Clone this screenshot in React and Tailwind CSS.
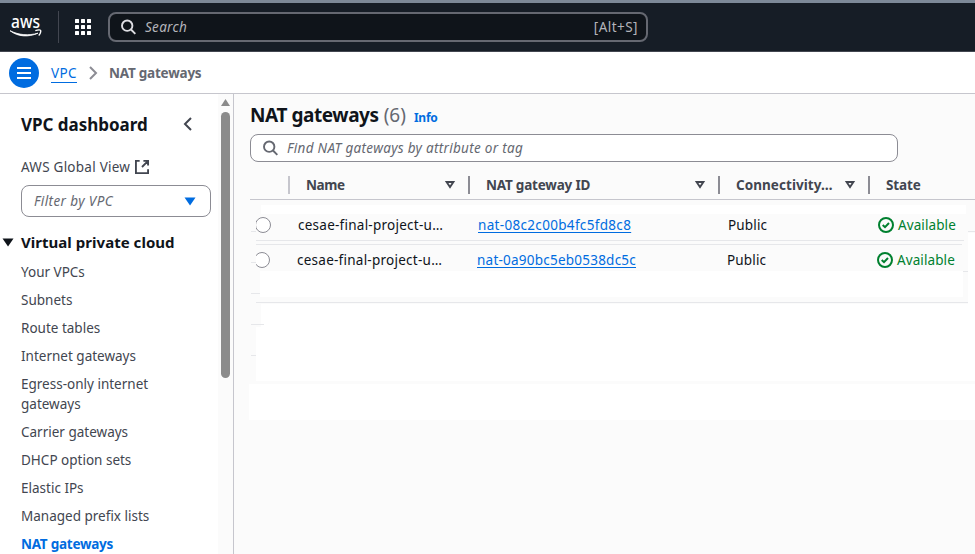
const patches = [
  'left-[27px] top-[111px] w-[705px] h-[9px]',
  'left-[26px] top-[177px] w-[703px] h-[26px]',
  'left-[27px] top-[210px] w-[714px] h-[23px]',
  'left-[22px] top-[233px] w-[719px] h-[54px]',
  'left-[15px] top-[290px] w-[726px] h-[36px]',
  'left-[734px] top-[139px] w-[7px] h-[80px]',
];

const rules = [
  'left-[22px] top-[146px] w-[708px]',
  'left-[22px] top-[150px] w-[706px]',
  'left-[22px] top-[208px] w-[712px]',
  'left-[17px] top-[137px] w-[5px]',
  'left-[17px] top-[168px] w-[5px]',
  'left-[17px] top-[199px] w-[9px]',
  'left-[17px] top-[230px] w-[13px]',
  'left-[17px] top-[261px] w-[5px]',
  'left-[734px] top-[137px] w-[7px]',
  'left-[729px] top-[177px] w-[5px]',
];

const links = ['Your VPCs', 'Subnets', 'Route tables', 'Internet gateways', 'Egress-only internet gateways', 'Carrier gateways', 'DHCP option sets', 'Elastic IPs', 'Managed prefix lists'];

function SearchIcon({ className }) {
  return (
    <svg className={className} width="16" height="16" viewBox="0 0 16 16" fill="none" stroke="currentColor" strokeWidth="1.9">
      <circle cx="6.2" cy="6.7" r="5.2" />
      <path d="m10 10.500 4.300 4.300" />
    </svg>
  );
}

function SortIcon() {
  return (
    <svg className="shrink-0 text-[#424650]" width="12" height="10" viewBox="0 0 12 10" fill="none" stroke="currentColor" strokeWidth="1.9">
      <path d="M2.600 2h6.800L6 7.100z" />
    </svg>
  );
}

function Header({ label, width, tracking = '', sortable = true, first }) {
  return (
    <div className={`flex h-[30px] shrink-0 items-center ${width}`}>
      <span className={`h-[18px] w-[2px] ${first ? 'bg-[#c6c6cd]' : 'bg-[#8c8c94]'}`} />
      <span className={`ml-4 flex-1 text-[13.5px] font-bold whitespace-nowrap text-[#424650] ${tracking}`}>{label}</span>
      {sortable && <span className="mr-[12px]"><SortIcon /></span>}
    </div>
  );
}

function Row({ id, className, idTracking, radioClip }) {
  return (
    <div className={`flex h-5 items-center text-[13.5px] leading-5 whitespace-nowrap text-[#0f141a] ${className}`}>
      <span className={`h-4 w-4 shrink-0 rounded-full border border-[#8c8c94] bg-white ${radioClip}`} />
      <span className="ml-[27px] w-[180px] shrink-0 tracking-[0.25px]">cesae-final-project-u…</span>
      <span className="w-[250px] shrink-0"><a className={`text-[#006ce0] underline underline-offset-2 ${idTracking}`}>{id}</a></span>
      <span className="w-[149px] shrink-0 tracking-[0.15px]">Public</span>
      <svg className="shrink-0 text-[#00802f]" width="18" height="18" viewBox="0 0 18 18" fill="none" stroke="currentColor" strokeWidth="2">
        <circle cx="9" cy="9" r="7" />
        <path d="m5.700 9 2.300 2.200 4-4.200" />
      </svg>
      <span className="ml-[3px] tracking-[0.1px] text-[#00802f]">Available</span>
    </div>
  );
}

export default function App() {
  return (
    <div className="flex h-[554px] w-[975px] flex-col overflow-hidden bg-white font-['Noto_Sans',sans-serif]">
      <header className="flex h-[52px] shrink-0 items-center border-t-[3px] border-b border-t-[#7d8998] border-b-[#424650] bg-[#161d26] text-white">
        <svg className="ml-[9px] w-[34px] overflow-visible" height="46" viewBox="0 -11 34 46">
          <text x="2" y="12.500" fontSize="18.5" fontWeight="500" fill="currentColor" textLength="29" lengthAdjust="spacingAndGlyphs">aws</text>
          <path d="M1 15.700C9 22 19.500 22.300 29 18.200c-9.500 2.600-19 2-28-2.500z" fill="currentColor" stroke="currentColor" strokeWidth="0.800" strokeLinejoin="round" />
          <path d="M26.300 15.600c2.300-.7 4.800-.8 5.300-.2.500.8-.2 3.400-1.900 5.100" fill="none" stroke="currentColor" strokeWidth="1.400" />
        </svg>
        <span className="ml-[15px] h-8 w-px bg-[#424650]" />
        <span className="ml-4 grid grid-cols-3 gap-[2px]">
          {Array.from({ length: 9 }, (_, i) => <i key={i} className="h-[4px] w-[4px] rounded-[0.5px] bg-white" />)}
        </span>
        <div className="ml-[17px] flex h-[30px] w-[540px] items-center rounded-lg border-2 border-[#656871] bg-[#0f141a] px-[10px] text-[13.5px] text-[#b4b4bb]">
          <SearchIcon className="ml-px text-[#dedee3]" />
          <span className="ml-[8px] flex-1 tracking-[0.3px] italic">Search</span>
          <span className="-mr-[2px] tracking-[0.45px]">[Alt+S]</span>
        </div>
      </header>
      <nav className="flex h-[42px] shrink-0 items-center border-b border-[#c6c6cd] pl-[9px] text-[13.5px]">
        <span className="flex h-[30px] w-[30px] flex-col items-center justify-center gap-[3px] rounded-full bg-[#006ce0]">
          <i className="h-[2px] w-[14px] bg-white" /><i className="h-[2px] w-[14px] bg-white" /><i className="h-[2px] w-[14px] bg-white" />
        </span>
        <a className="mt-[2px] ml-3 w-[26px] border-b border-[#006ce0] leading-[18px] tracking-[0.4px] text-[#006ce0]">VPC</a>
        <svg className="ml-3 text-[#8c8c94]" width="9" height="14" viewBox="0 0 9 14" fill="none" stroke="currentColor" strokeWidth="2"><path d="m1 1 6 6-6 6" /></svg>
        <span className="mt-[2px] ml-[11px] font-bold tracking-[-0.22px] text-[#656871]">NAT gateways</span>
      </nav>
      <div className="flex min-h-0 flex-1">
        <aside className="flex w-[234px] shrink-0 border-r border-[#c6c6cd]">
          <div className="w-[218px] shrink-0 text-[13.5px] leading-5 text-[#424650]">
            <div className="mt-[19px] flex h-6 items-center pl-[21px] text-[#0f141a]">
              <h2 className="w-[162px] text-[17px] font-bold tracking-[-0.03px] whitespace-nowrap">VPC dashboard</h2>
              <svg className="mb-[2px] text-[#424650]" width="9" height="14" viewBox="0 0 9 14" fill="none" stroke="currentColor" strokeWidth="2"><path d="m8 1-6 6 6 6" /></svg>
            </div>
            <div className="mt-[20px] flex items-center pl-[21px]">
              <span className="tracking-[0.25px]">AWS Global View</span>
              <svg className="ml-[5px]" width="14" height="14" viewBox="0 0 15 15" fill="none" stroke="currentColor" strokeWidth="2"><path d="M5 1H1v13h13v-4M9 1h5v5M13.500 1.500 7.500 7.500" /></svg>
            </div>
            <div className="mt-2 ml-[21px] flex h-8 w-[190px] items-center rounded-lg border border-[#8c8c94] pr-[14px] pl-3 text-[#656871]">
              <span className="flex-1 tracking-[0.4px] italic">Filter by VPC</span>
              <svg width="12" height="9" viewBox="0 0 12 9" fill="#006ce0"><path d="M.5.500h11L6 8.500z" /></svg>
            </div>
            <div className="mt-[15px] flex items-center pl-[2px] text-[#0f141a]">
              <svg width="12" height="9" viewBox="0 0 12 9" fill="currentColor"><path d="M.5.500h11L6 8.500z" /></svg>
              <h3 className="ml-[7px] text-[15px] font-bold tracking-[0.03px] whitespace-nowrap">Virtual private cloud</h3>
            </div>
            <ul className="mt-[10px] flex w-[180px] flex-col gap-2 pl-[21px]">
              {links.map((l) => <li key={l}>{l}</li>)}
              <li className="font-bold tracking-[-0.25px] text-[#006ce0]">NAT gateways</li>
            </ul>
          </div>
          <div className="flex w-[15px] flex-col items-center bg-[#fbfbfb] pt-[5px]">
            <svg width="9" height="7" viewBox="0 0 9 7" fill="#8b8b8b"><path d="M4.500 0 9 7H0z" /></svg>
            <span className="mt-[6px] h-[266px] w-[9px] rounded-full bg-[#8b8b8b]" />
          </div>
        </aside>
        <main className="relative flex-1 overflow-hidden bg-[#fbfbfb]">
          {patches.map((c) => <i key={c} className={`absolute bg-white ${c}`} />)}
          {rules.map((c) => <i key={c} className={`absolute h-px bg-[#e6e7ea] ${c}`} />)}
          <div className="relative pl-4">
            <div className="flex items-baseline pt-[9px] leading-[25px] whitespace-nowrap">
              <h1 className="text-[19px] font-bold tracking-[-0.43px] text-[#0f141a]">NAT gateways</h1>
              <span className="ml-[5px] text-[19px] text-[#656871]">(6)</span>
              <a className="ml-2 text-xs font-bold tracking-[-0.25px] text-[#006ce0]">Info</a>
            </div>
            <div className="mt-[6px] flex h-7 w-[648px] items-center rounded-lg border border-[#8c8c94] bg-white pl-3 text-[13.5px] text-[#656871]">
              <SearchIcon />
              <span className="ml-2 tracking-[0.3px] italic">Find NAT gateways by attribute or tag</span>
            </div>
            <div className="mt-[8px] flex h-[30px] border-b border-[#c6c6cd] pl-[38px]">
              <Header label="Name" width="w-[180px]" tracking="tracking-[-0.4px]" first />
              <Header label="NAT gateway ID" width="w-[250px]" tracking="tracking-[-0.2px]" />
              <Header label="Connectivity…" width="w-[150px]" tracking="tracking-[0.05px]" />
              <Header label="State" width="w-[100px]" tracking="tracking-[-0.1px]" sortable={false} />
            </div>
            <Row id="nat-08c2c00b4fc5fd8c8" idTracking="tracking-[0.32px]" radioClip="[clip-path:inset(0_0_0_1px)]" className="mt-[15px] pl-[5px]" />
            <Row id="nat-0a90bc5eb0538dc5c" idTracking="tracking-[0.23px]" radioClip="[clip-path:inset(0_0_0_2px)]" className="mt-[15px] pl-[4px]" />
          </div>
        </main>
      </div>
    </div>
  );
}
